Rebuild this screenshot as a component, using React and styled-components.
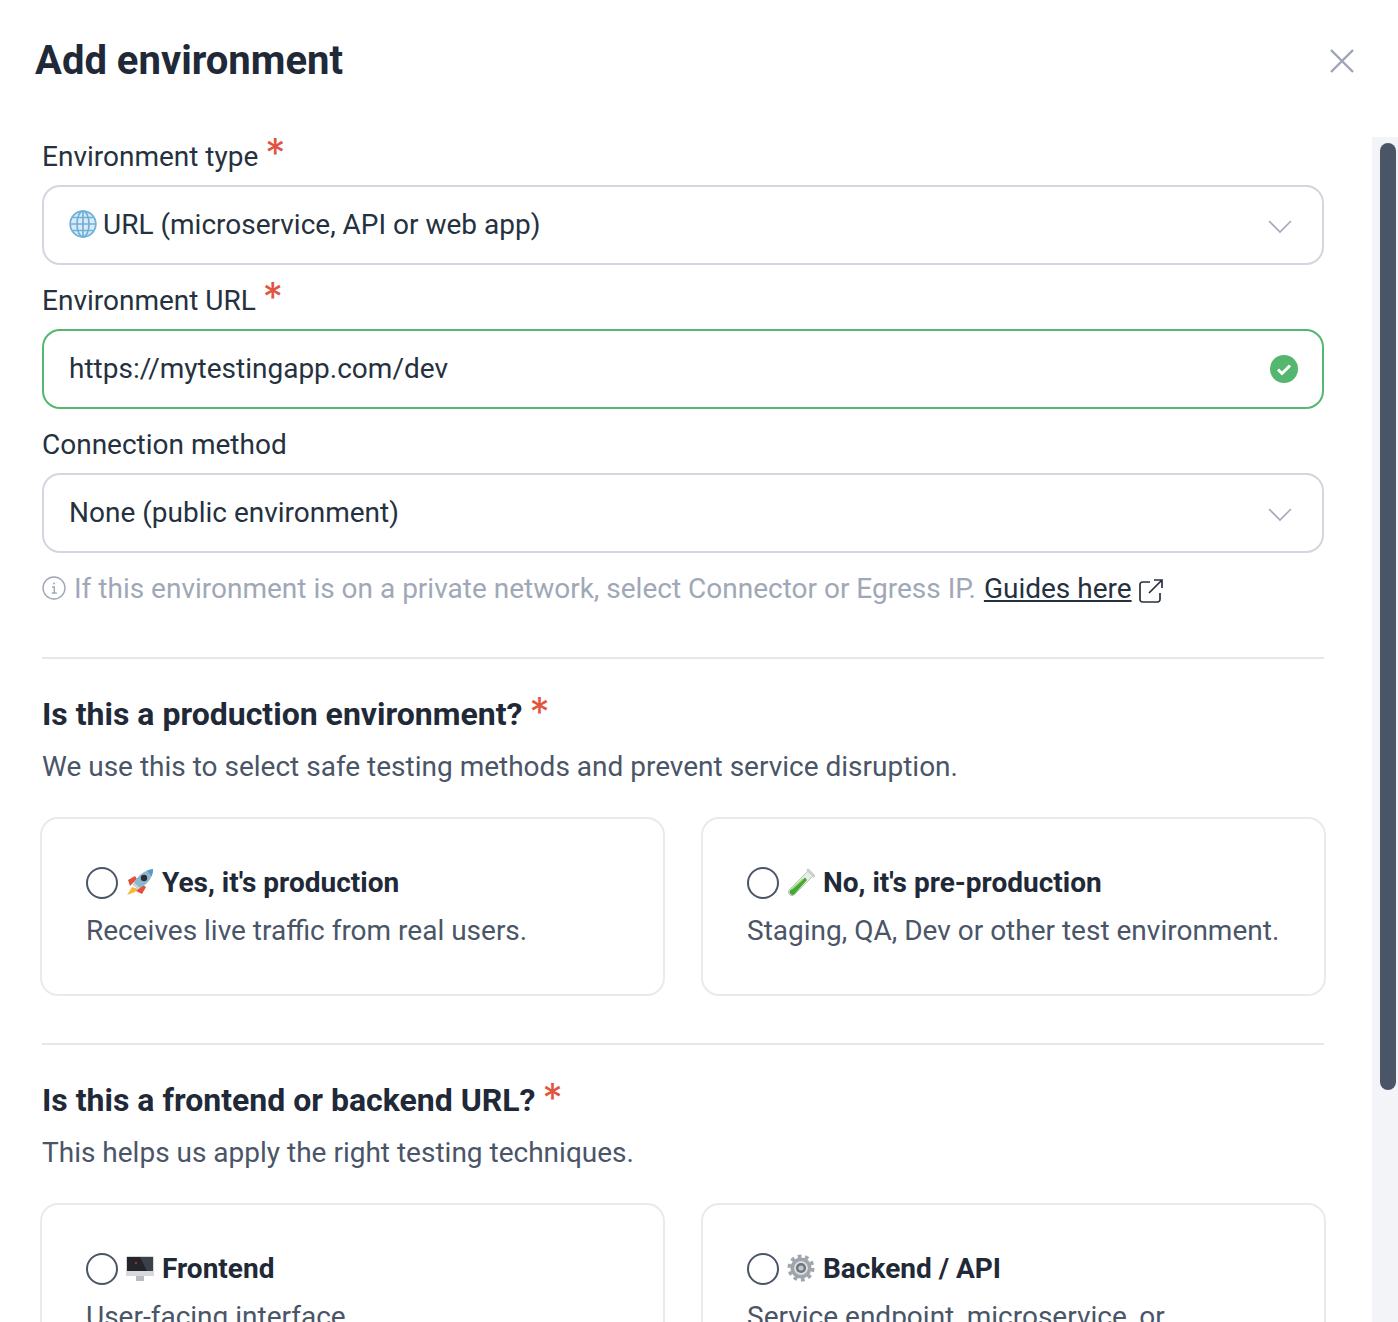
import React from 'react';
import styled, { createGlobalStyle } from 'styled-components';

const GlobalStyle = createGlobalStyle`
	html, body {
		margin: 0;
		padding: 0;
		background: #fff;
		overflow: hidden;
	}
	* {
		box-sizing: border-box;
	}
`;

const Modal = styled.div`
	display: flex;
	flex-direction: column;
	width: 1398px;
	height: 1322px;
	overflow: hidden;
	background: #fff;
	color: #1f2937;
	font-family: Roboto, "Liberation Sans", sans-serif;
`;

const Header = styled.header`
	display: flex;
	flex: none;
	height: 137px;
	justify-content: space-between;
	align-items: flex-start;
	padding: 37px 44px 0 35px;
`;

const Title = styled.h1`
	margin: 0;
	font-size: 40px;
	line-height: 48px;
	font-weight: 700;
	color: #1f2937;
`;

const CloseButton = styled.button`
	display: flex;
	width: 24px;
	height: 24px;
	margin-top: 12px;
	padding: 0;
	border: 0;
	background: none;
`;

const Body = styled.div`
	display: flex;
	flex: 1;
	min-height: 0;
`;

const Content = styled.main`
	flex: 1;
	min-width: 0;
	padding: 0 48px 0 42px;
`;

const Track = styled.div`
	flex: none;
	width: 26px;
	padding: 6px 2px 0 8px;
	background: #f2f4f8;
`;

const Thumb = styled.div`
	height: 947px;
	border-radius: 8px;
	background: #4a5568;
`;

const Star = styled.span`
	margin-left: 7px;
	font-family: Inter, sans-serif;
	font-size: 40px;
	font-weight: 400;
	line-height: 38px;
	color: #e2543f;
`;

const Label = styled.div`
	display: flex;
	align-items: flex-start;
	height: 38px;
	margin-bottom: 10px;
	font-size: 28px;
	line-height: 40px;
	color: #263140;

	${Star} {
		margin-top: -3px;
	}
`;

const Field = styled.div`
	display: flex;
	align-items: center;
	gap: 6px;
	height: 80px;
	margin-bottom: 16px;
	padding: 0 24px 2px 25px;
	border: 2px solid ${({ $valid }) => ($valid ? '#55b670' : '#d2d6de')};
	border-radius: 18px;
	font-size: 28px;
	color: #263140;
`;

const FieldText = styled.span`
	flex: 1;
`;

const ChevronWrap = styled.span`
	display: flex;
	margin: 6px 6px 0 0;
`;

const CheckWrap = styled.span`
	display: flex;
	margin-top: 2px;
`;

const Hint = styled.div`
	display: flex;
	align-items: center;
	height: 38px;
	font-size: 28px;
	color: #a0a8b8;
`;

const HintText = styled.span`
	margin: 0 8px;
`;

const GuideLink = styled.a`
	margin-right: 7px;
	color: #263140;
	text-decoration: underline;
`;

const ExternalWrap = styled.span`
	display: flex;
	margin-top: 5px;
`;

const Divider = styled.hr`
	height: 2px;
	margin: ${({ $first }) => ($first ? '50px 0 33px' : '47px 0 33px')};
	border: 0;
	background: #e5e7eb;
`;

const Heading = styled.div`
	display: flex;
	align-items: flex-start;
	height: 44px;
	font-size: 32px;
	line-height: 44px;
	font-weight: 700;
	color: #1f2937;

	${Star} {
		margin-top: 1px;
	}
`;

const Sub = styled.p`
	margin: 12px 0 0;
	font-size: 28px;
	line-height: 38px;
	color: #4a5568;
`;

const Cards = styled.div`
	display: grid;
	grid-template-columns: 1fr 1fr;
	gap: 36px;
	margin: 31px -2px 0 -2px;
`;

const Card = styled.label`
	display: block;
	height: 179px;
	padding: 45px 44px;
	border: 2px solid #e8eaef;
	border-radius: 18px;
`;

const CardTitle = styled.div`
	display: flex;
	align-items: center;
	gap: 8px;
	height: 36px;
	font-size: 28px;
	font-weight: 700;
	color: #1f2937;
`;

const Radio = styled.span`
	flex: none;
	width: 32px;
	height: 32px;
	margin-top: 1px;
	border: 2px solid #4a5568;
	border-radius: 50%;
`;

const CardText = styled.div`
	margin-top: 12px;
	font-size: 28px;
	line-height: 38px;
	color: #4a5568;
`;

const CloseIcon = () => (
	<svg width="24" height="24" viewBox="0 0 24 24" fill="none" stroke="#9ea3b5" strokeWidth="2.4">
		<path d="M1 1l22 22M23 1L1 23" />
	</svg>
);

const Chevron = () => (
	<ChevronWrap>
		<svg width="24" height="14" viewBox="0 0 24 14" fill="none" stroke="#a8a8bc" strokeWidth="1.6">
			<path d="M1 1l11 11L23 1" />
		</svg>
	</ChevronWrap>
);

const CheckIcon = () => (
	<CheckWrap>
		<svg width="28" height="28" viewBox="0 0 28 28">
			<circle cx="14" cy="14" r="14" fill="#55b670" />
			<path d="M8 14.500l4 4 8-8" fill="none" stroke="#fff" strokeWidth="3" />
		</svg>
	</CheckWrap>
);

const InfoIcon = () => (
	<svg width="24" height="24" viewBox="0 0 24 24" fill="none" stroke="#a0a8b8" strokeWidth="1.4">
		<circle cx="12" cy="12" r="11" />
		<path d="M10 11h2.300v6M9.800 17h5" />
		<circle cx="12" cy="7.500" r="1" fill="#a0a8b8" stroke="none" />
	</svg>
);

const ExternalIcon = () => (
	<ExternalWrap>
		<svg width="24" height="24" viewBox="0 0 24 24" fill="none" stroke="#263140" strokeWidth="1.700">
			<path d="M11 3H3.500A2.500 2.500 0 0 0 1 5.500v15A2.500 2.500 0 0 0 3.500 23h15a2.500 2.500 0 0 0 2.500-2.500V14" />
			<path d="M15 1h8v8M23 1L10 14" />
		</svg>
	</ExternalWrap>
);

const GlobeEmoji = () => (
	<svg width="28" height="28" viewBox="0 0 28 28" fill="none">
		<circle cx="14" cy="14" r="13.500" fill="#dbeaf5" />
		<g stroke="#6fb1d9" strokeWidth="1.700">
			<circle cx="14" cy="14" r="12.800" />
			<ellipse cx="14" cy="14" rx="6" ry="12.800" />
			<path d="M14 1v26M1.500 14h25M3.500 7.500h21M3.500 20.500h21" />
		</g>
	</svg>
);

const RocketEmoji = () => (
	<svg width="28" height="28" viewBox="0 0 28 28">
		<path d="M6 19L1 27l8-3 3-3z" fill="#f6b73c" />
		<path d="M2 12l7-4 2 3-7 7z" fill="#e2503a" />
		<path d="M16 26l4-7-3-2-7 6z" fill="#e2503a" />
		<path d="M7 17C11 8 18 2 27 1c0 9-6 16-15 20z" fill="#8db7cf" />
		<path d="M21 2.500l6-1.500c0 3-.7 5.500-1.500 7.500z" fill="#5b9ac2" />
		<path d="M7 17l5 4 2-1-5.500-5z" fill="#c9d4dc" />
		<circle cx="18" cy="10" r="3.200" fill="#2b2f38" />
	</svg>
);

const TubeEmoji = () => (
	<svg width="28" height="28" viewBox="0 0 28 28" fill="none">
		<path d="M21 3L2.500 21.500a3.500 3.500 0 0 0 5 5L26 8" fill="#e6eee6" stroke="#b9c4b9" strokeWidth="1" />
		<path d="M18 9.500L3.500 22a2.800 2.800 0 0 0 4 4L20 12z" fill="#46a832" />
		<path d="M5 21L16 11" stroke="#9bdc7c" strokeWidth="1.500" />
		<path d="M21 2l6 6" stroke="#c9d0d4" strokeWidth="3" strokeLinecap="round" />
	</svg>
);

const MonitorEmoji = () => (
	<svg width="28" height="28" viewBox="0 0 28 28">
		<rect x="10" y="20" width="8" height="7" fill="#b8bcc2" />
		<rect y="2" width="28" height="20" rx="1.500" fill="#d5d8dc" />
		<rect x="1" y="3" width="26" height="14" fill="#23252b" />
		<path d="M14 3h13v14H21z" fill="#3c4048" />
		<circle cx="10" cy="9" r="1" fill="#c9302c" />
	</svg>
);

const GearEmoji = () => (
	<svg width="28" height="28" viewBox="0 0 28 28" fill="none">
		<circle cx="14" cy="14" r="10.500" fill="#a0a5ab" />
		<circle cx="14" cy="14" r="11.500" stroke="#a0a5ab" strokeWidth="4" strokeDasharray="3.600 3.630" />
		<circle cx="14" cy="14" r="7" fill="#d7dade" />
		<circle cx="14" cy="14" r="5" fill="#6f747b" />
		<circle cx="14" cy="14" r="2.600" fill="#c3c7cc" />
	</svg>
);

const Question = ({ title, sub, options, first }) => (
	<>
		<Divider $first={first} />
		<Heading>{title}<Star>*</Star></Heading>
		<Sub>{sub}</Sub>
		<Cards>
			{options.map(({ icon, name, text }) => (
				<Card key={name}>
					<CardTitle><Radio />{icon}{name}</CardTitle>
					<CardText>{text}</CardText>
				</Card>
			))}
		</Cards>
	</>
);

export default function App() {
	return (
		<Modal>
			<GlobalStyle />
			<Header>
				<Title>Add environment</Title>
				<CloseButton><CloseIcon /></CloseButton>
			</Header>
			<Body>
				<Content>
					<Label>Environment type<Star>*</Star></Label>
					<Field>
						<GlobeEmoji />
						<FieldText>URL (microservice, API or web app)</FieldText>
						<Chevron />
					</Field>
					<Label>Environment URL<Star>*</Star></Label>
					<Field $valid>
						<FieldText>https://mytestingapp.com/dev</FieldText>
						<CheckIcon />
					</Field>
					<Label>Connection method</Label>
					<Field>
						<FieldText>None (public environment)</FieldText>
						<Chevron />
					</Field>
					<Hint>
						<InfoIcon />
						<HintText>If this environment is on a private network, select Connector or Egress IP.</HintText>
						<GuideLink href="#">Guides here</GuideLink>
						<ExternalIcon />
					</Hint>
					<Question
						first
						title="Is this a production environment?"
						sub="We use this to select safe testing methods and prevent service disruption."
						options={[
							{ icon: <RocketEmoji />, name: "Yes, it's production", text: 'Receives live traffic from real users.' },
							{ icon: <TubeEmoji />, name: "No, it's pre-production", text: 'Staging, QA, Dev or other test environment.' }
						]}
					/>
					<Question
						title="Is this a frontend or backend URL?"
						sub="This helps us apply the right testing techniques."
						options={[
							{ icon: <MonitorEmoji />, name: 'Frontend', text: 'User-facing interface' },
							{ icon: <GearEmoji />, name: 'Backend / API', text: 'Service endpoint, microservice, or' }
						]}
					/>
				</Content>
				<Track><Thumb /></Track>
			</Body>
		</Modal>
	);
}
